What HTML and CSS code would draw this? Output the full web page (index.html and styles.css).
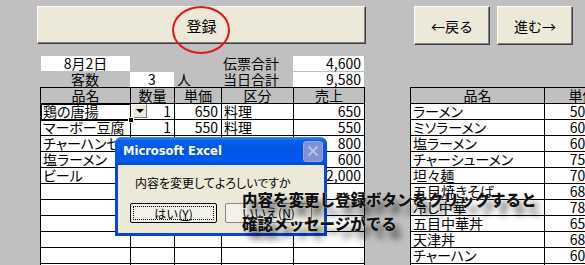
FILE: index.html
```html
<!DOCTYPE html>
<html lang="ja">
<head>
  <meta charset="UTF-8" />
  <title>伝票入力</title>
  <link rel="stylesheet" href="styles.css">
</head>
<body>
  <div class="toolbar">
    <button class="btn btn-save">登録<span class="circle"></span></button>
    <div class="nav">
      <button class="btn btn-nav">←戻る</button>
      <button class="btn btn-nav">進む→</button>
    </div>
  </div>

  <div class="main">
    <div class="left">
      <div class="info">
        <div class="box center">8月2日</div>
        <div></div>
        <div></div>
        <div class="label">伝票合計</div>
        <div class="box num">4,600</div>
        <div class="center">客数</div>
        <div class="box center">3</div>
        <div class="unit">人</div>
        <div class="label">当日合計</div>
        <div class="box num">9,580</div>
      </div>

      <table class="slip">
        <colgroup>
          <col style="width:90px"><col style="width:44px"><col style="width:47px"><col style="width:72px"><col style="width:71px">
        </colgroup>
        <tr><th>品名</th><th>数量</th><th>単価</th><th>区分</th><th>売上</th></tr>
        <tr>
          <td class="active">鶏の唐揚<span class="handle"></span></td>
          <td class="num qty"><span class="drop"></span>1</td>
          <td class="num">650</td><td>料理</td><td class="num">650</td>
        </tr>
        <tr><td>マーボー豆腐</td><td class="num">1</td><td class="num">550</td><td>料理</td><td class="num">550</td></tr>
        <tr><td>チャーハンセット</td><td class="num">1</td><td class="num">800</td><td>料理</td><td class="num">800</td></tr>
        <tr><td>塩ラーメン</td><td class="num">1</td><td class="num">600</td><td>料理</td><td class="num">600</td></tr>
        <tr><td>ビール</td><td class="num">4</td><td class="num">500</td><td>飲物</td><td class="num">2,000</td></tr>
        <tr><td></td><td></td><td></td><td></td><td></td></tr>
        <tr><td></td><td></td><td></td><td></td><td></td></tr>
        <tr><td></td><td></td><td></td><td></td><td></td></tr>
        <tr><td></td><td></td><td></td><td></td><td></td></tr>
        <tr><td></td><td></td><td></td><td></td><td></td></tr>
        <tr><td></td><td></td><td></td><td></td><td></td></tr>
      </table>
    </div>

    <table class="menu">
      <colgroup><col style="width:134px"><col style="width:76px"></colgroup>
      <tr><th>品名</th><th>単価</th></tr>
      <tr><td>ラーメン</td><td class="num">500</td></tr>
      <tr><td>ミソラーメン</td><td class="num">600</td></tr>
      <tr><td>塩ラーメン</td><td class="num">600</td></tr>
      <tr><td>チャーシューメン</td><td class="num">750</td></tr>
      <tr><td>坦々麺</td><td class="num">700</td></tr>
      <tr><td>五目焼きそば</td><td class="num">680</td></tr>
      <tr><td>冷し中華</td><td class="num">780</td></tr>
      <tr><td>五目中華丼</td><td class="num">650</td></tr>
      <tr><td>天津丼</td><td class="num">680</td></tr>
      <tr><td>チャーハン</td><td class="num">600</td></tr>
      <tr><td>餃子</td><td class="num">350</td></tr>
    </table>
  </div>

  <div class="dialog">
    <div class="dialog-title">
      <span>Microsoft Excel</span>
      <span class="close">
        <svg width="12" height="12" viewBox="0 0 12 12"><path d="M1.5 1.5 L10.5 10.5 M10.5 1.5 L1.5 10.5" stroke="#b8c0e6" stroke-width="2"/></svg>
      </span>
    </div>
    <div class="dialog-body">
      <p class="msg">内容を変更してよろしいですか</p>
      <div class="dialog-btns">
        <button class="dbtn dbtn-default"><span class="focus">はい(<u>Y</u>)</span></button>
        <button class="dbtn">いいえ(<u>N</u>)</button>
      </div>
    </div>
  </div>

  <div class="note">内容を変更し登録ボタンをクリックすると<br>確認メッセージがでる</div>
</body>
</html>
```

FILE: styles.css
```css
body {
  margin: 0;
  width: 585px;
  height: 265px;
  overflow: hidden;
  position: relative;
  background: #c0c0c0;
  font-family: "Noto Sans CJK JP", sans-serif;
  font-size: 14px;
  font-feature-settings: "palt";
  color: #000;
}

.toolbar {
  display: flex;
  padding-top: 6px;
  height: 39px;
}

.btn {
  background: #ece9d8;
  border: 1px solid;
  border-color: #fff #404040 #404040 #fff;
  box-shadow: inset -1px -1px 0 #808080;
  font-family: "Noto Sans CJK JP", sans-serif;
  font-size: 14px;
  padding: 0;
  color: #000;
}

.btn-save {
  position: relative;
  margin-left: 37px;
  width: 329px;
  height: 38px;
  font-size: 15px;
}

.circle {
  position: absolute;
  left: 134px;
  top: -1px;
  width: 58px;
  height: 48px;
  box-sizing: border-box;
  border: 2px solid #e4151c;
  border-radius: 50%;
}

.nav {
  display: flex;
  gap: 7px;
  margin-left: 48px;
}

.btn-nav {
  width: 76px;
  height: 39px;
}

.main {
  display: flex;
  align-items: flex-start;
  margin-top: 11px;
}

.left {
  margin-left: 40px;
}

.info {
  display: grid;
  grid-template-columns: 90px 44px 47px 72px 71px;
  grid-template-rows: 15px 15px;
  row-gap: 1px;
  line-height: 15px;
}

.box { background: #fff; }
.info .box:first-child { margin-left: 1px; }
.center { text-align: center; }
.num { text-align: right; padding-right: 3px; }
.unit { padding-left: 3px; }
.label { padding-left: 2px; }

.slip, .menu {
  border-collapse: collapse;
  table-layout: fixed;
}

.slip { width: 325px; }
.menu { width: 211px; flex: none; }

.slip th, .slip td, .menu th, .menu td {
  border: 1px solid #000;
  height: 15px;
  line-height: 15px;
  padding: 0 2px;
  white-space: nowrap;
  overflow: hidden;
  font-weight: normal;
  background: #fff;
}

.slip th, .menu th {
  background: #c0c0c0;
  text-align: center;
}

.slip td.num { padding-right: 3px; }
.menu td.num { padding-right: 27px; }

.menu {
  margin-left: 45px;
  margin-top: 31px;
}

.slip td.active {
  position: relative;
  overflow: visible;
  outline: 2px solid #000;
  outline-offset: -1px;
}

.handle {
  position: absolute;
  right: -4px;
  bottom: -4px;
  width: 4px;
  height: 4px;
  background: #000;
  border: 1px solid #fff;
  z-index: 2;
}

.qty { position: relative; }

.drop {
  position: absolute;
  left: 1px;
  top: 0;
  width: 15px;
  height: 14px;
  box-sizing: border-box;
  background: #ece9d8;
  border: 1px solid;
  border-color: #fff #808080 #808080 #fff;
}

.drop::after {
  content: "";
  position: absolute;
  left: 3px;
  top: 4px;
  border-left: 4px solid transparent;
  border-right: 4px solid transparent;
  border-top: 4px solid #000;
}

.dialog {
  position: absolute;
  left: 115px;
  top: 137px;
  width: 212px;
  height: 99px;
  box-sizing: border-box;
  padding: 0 3px 3px;
  background: #0846d4;
  border-radius: 7px 7px 0 0;
  display: flex;
  flex-direction: column;
}

.dialog-title {
  height: 28px;
  margin: 0 -3px;
  padding: 0 4px 0 8px;
  border-radius: 7px 7px 0 0;
  background: linear-gradient(#3d8cf8 0, #0a60ea 12%, #0055e5 50%, #0059ee 85%, #0349d0 100%);
  color: #fff;
  font-family: "DejaVu Sans", sans-serif;
  font-weight: bold;
  font-size: 11.5px;
  display: flex;
  align-items: center;
  justify-content: space-between;
}

.close {
  width: 20px;
  height: 21px;
  box-sizing: border-box;
  border: 1px solid #9aa6dc;
  border-radius: 3px;
  background: #8290d2;
  display: flex;
  align-items: center;
  justify-content: center;
}

.dialog-body {
  flex: 1;
  background: #ece9d8;
  padding: 0 12px;
}

.msg {
  margin: 11px 0 0 5px;
  font-size: 12px;
  line-height: 14px;
}

.dialog-btns {
  display: flex;
  gap: 8px;
  margin-top: 13px;
}

.dbtn {
  width: 87px;
  height: 20px;
  padding: 0;
  font-family: "Noto Sans CJK JP", sans-serif;
  font-size: 12px;
  line-height: 14px;
  background: #f2f1ea;
  border: 1px solid #8a8878;
  border-radius: 2px;
  color: #000;
}

.dbtn-default {
  border-color: #000;
  padding: 2px;
}

.focus {
  display: block;
  height: 100%;
  box-sizing: border-box;
  border: 1px dotted #000;
}

.note {
  position: absolute;
  left: 242px;
  top: 187px;
  font-size: 15.5px;
  font-weight: 900;
  line-height: 24px;
  font-feature-settings: normal;
  color: #111;
  white-space: nowrap;
  text-shadow: 0 0 1px #fff, 6px 8px 6px rgba(0, 0, 0, 0.55);
}
```
